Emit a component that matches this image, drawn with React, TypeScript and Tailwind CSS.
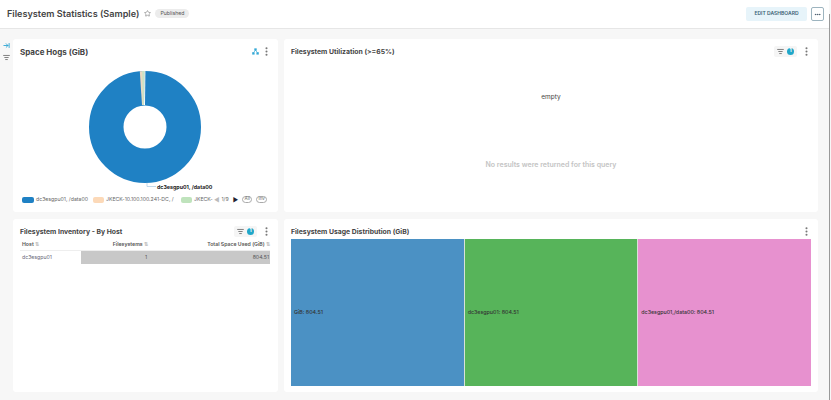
import { ArrowRightToLine, Ellipsis, EllipsisVertical, ListFilter, Star } from "lucide-react";
import type { ReactNode } from "react";

function Kebab() {
  return <EllipsisVertical className="size-[11px] text-[#777]" strokeWidth={2.5} />;
}

function FilterBadge() {
  return (
    <div className="flex h-[11px] w-[23px] items-center justify-center gap-[3px] rounded-[2px] bg-[#f5f5f5]">
      <ListFilter className="size-[7px] text-[#555]" strokeWidth={2.5} />
      <span className="flex size-[7px] items-center justify-center rounded-full bg-[#20a7c9] text-[5px] font-bold text-white">
        1
      </span>
    </div>
  );
}

function Card({
  title,
  actions,
  titleClassName,
  children,
}: {
  title: string;
  actions: ReactNode;
  titleClassName?: string;
  children?: ReactNode;
}) {
  return (
    <section className="flex h-[173px] flex-col rounded-[3px] bg-white">
      <header className="flex h-[20px] shrink-0 items-start justify-between pl-[7px] pr-[6px] pt-[6px]">
        <h2 className={`pt-[1px] font-bold leading-[12px] text-[#444] ${titleClassName ?? "text-[6.85px]"}`}>{title}</h2>
        <div className="flex h-[12px] items-center gap-[4px]">{actions}</div>
      </header>
      {children}
    </section>
  );
}

function SpaceHogsChart() {
  return (
    <svg viewBox="0 0 265 136" className="h-[136px] w-[265px] shrink-0">
      <circle cx="132" cy="68" r="38.75" fill="none" stroke="#1f81c4" strokeWidth="34.5" />
      <path d="M126.8 12.2 L129 46.1 L131 46.1 L131.7 12 Z" fill="#ecd9c0" />
      <path d="M129.2 12.1 L129.8 46.1 L131 46.1 L131.7 12 Z" fill="#c9e3c6" />
      <path d="M131.7 12 L132.4 12 L132 46 L131 46 Z" fill="#fff" />
      <path d="M134 124 V127.5 H143" fill="none" stroke="#a9c9e2" strokeWidth="0.7" />
      <text x="144" y="130" fontSize="5.3" fontWeight="700" fill="#222" fontFamily="Inter, sans-serif">
        dc3esgpu01, /data00
      </text>
    </svg>
  );
}

function Legend() {
  return (
    <div className="flex h-[9px] items-center whitespace-nowrap pl-[9px] text-[5.2px] text-[#666]">
      <span className="h-[6px] w-[12px] shrink-0 rounded-[2px] bg-[#1f81c4]" />
      <span className="ml-[2px] w-[54px]">dc3esgpu01, /data00</span>
      <span className="ml-[3px] h-[6px] w-[11px] shrink-0 rounded-[2px] bg-[#fcd9b8]" />
      <span className="ml-[2px] w-[72px]">JKECK-10.100.100.241-DC, /</span>
      <span className="ml-[3px] h-[6px] w-[11px] shrink-0 rounded-[2px] bg-[#bfe3bc]" />
      <span className="ml-[2px] w-[18px]">JKECK-</span>
      <span className="ml-[2px] text-[6px] leading-none text-[#bbb]">◀</span>
      <span className="ml-[2px]">1/9</span>
      <span className="ml-[4px] text-[6px] leading-none text-[#223]">▶</span>
      <span className="ml-[4px] flex h-[7px] w-[10px] shrink-0 items-center justify-center rounded-full border-[0.5px] border-[#aaa] text-[4.5px]">
        All
      </span>
      <span className="ml-[4px] flex h-[7px] w-[11px] shrink-0 items-center justify-center rounded-full border-[0.5px] border-[#aaa] text-[4.5px]">
        Inv
      </span>
    </div>
  );
}

function InventoryTable() {
  return (
    <div className="pl-[7px] pr-[8px] text-[5.2px] text-[#555]">
      <div className="grid h-[12px] grid-cols-[61px_1fr_122px] items-center border-b border-[#eee] font-semibold">
        <span className="pl-[2px]">
          Host <span className="text-[#bbb]">⇅</span>
        </span>
        <span className="text-right">
          Filesystems <span className="text-[#bbb]">⇅</span>
        </span>
        <span className="text-right">
          Total Space Used (GiB) <span className="text-[#bbb]">⇅</span>
        </span>
      </div>
      <div className="grid h-[13px] grid-cols-[61px_1fr_122px] items-center">
        <span className="pl-[2px] text-[#667]">dc3esgpu01</span>
        <span className="flex h-full items-center justify-end bg-[#c8c8c8] pr-[1px]">1</span>
        <span className="flex h-full items-center justify-end bg-[#c8c8c8] pr-[1px]">804.51</span>
      </div>
    </div>
  );
}

function Treemap() {
  const cells = [
    { label: "GiB: 804.51", color: "bg-[#4b91c4]" },
    { label: "dc3esgpu01: 804.51", color: "bg-[#57b45a]" },
    { label: "dc3esgpu01,/data00: 804.51", color: "bg-[#e791cf]" },
  ];
  return (
    <div className="mx-[7px] grid h-[147px] grid-cols-3 gap-px bg-[#d8e2d8]">
      {cells.map((cell) => (
        <div
          key={cell.label}
          className={`flex items-center pl-[3px] text-[5.3px] font-medium text-[#333] ${cell.color}`}
        >
          {cell.label}
        </div>
      ))}
    </div>
  );
}

export default function App() {
  return (
    <div className="flex h-[400px] w-[831px] overflow-hidden bg-[#f7f7f7] font-['Inter',sans-serif]">
      <div className="flex w-[829px] shrink-0 flex-col">
        <header className="flex h-[29px] shrink-0 items-center justify-between border-b border-[#e6e6e6] bg-white pl-[7px] pr-[5px]">
          <div className="flex items-center">
            <h1 className="text-[9.1px] font-semibold text-[#444]">Filesystem Statistics (Sample)</h1>
            <Star className="ml-[5px] size-[7px] text-[#777]" />
            <span className="ml-[4px] flex h-[9px] items-center rounded-full bg-[#ececec] px-[5px] text-[5.2px] text-[#555]">
              Published
            </span>
          </div>
          <div className="flex items-center gap-[4px]">
            <button className="flex h-[14px] w-[61px] items-center justify-center rounded-[2px] bg-[#e7f4fa] text-[5px] font-semibold text-[#3a6274]">
              EDIT DASHBOARD
            </button>
            <button className="flex h-[14px] w-[13px] items-center justify-center rounded-[2px] border border-[#9db4bf] text-[#456]">
              <Ellipsis className="size-[7px]" strokeWidth={3} />
            </button>
          </div>
        </header>
        <div className="flex min-h-0 flex-1">
          <aside className="flex w-[13px] shrink-0 flex-col items-center gap-[5px] pt-[13px]">
            <ArrowRightToLine className="size-[7px] text-[#2aa3d2]" strokeWidth={3} />
            <ListFilter className="size-[7px] text-[#555]" strokeWidth={2.5} />
          </aside>
          <main className="grid w-[805px] grid-cols-[265px_534px] content-start gap-x-[6px] gap-y-[7px] pt-[10px]">
            <Card
              title="Space Hogs (GiB)"
              titleClassName="text-[8px]"
              actions={
                <>
                  <svg viewBox="0 0 10 10" className="-mr-[2px] size-[7px] fill-[#35a9d6]">
                    <rect x="3.3" y="0.5" width="3.4" height="3.4" />
                    <rect x="0.3" y="6" width="3.4" height="3.4" />
                    <rect x="6.3" y="6" width="3.4" height="3.4" />
                    <path d="M5 3.5 L2 6.5 M5 3.5 L8 6.5" stroke="#35a9d6" />
                  </svg>
                  <Kebab />
                </>
              }
            >
              <SpaceHogsChart />
              <Legend />
            </Card>
            <Card
              title="Filesystem Utilization (>=65%)"
              actions={
                <>
                  <FilterBadge />
                  <Kebab />
                </>
              }
            >
              <p className="pt-[34px] text-center text-[6.5px] text-[#444]">empty</p>
              <p className="pt-[57px] text-center text-[7px] font-semibold text-[#c4c4c4]">
                No results were returned for this query
              </p>
            </Card>
            <Card
              title="Filesystem Inventory - By Host"
              actions={
                <>
                  <FilterBadge />
                  <Kebab />
                </>
              }
            >
              <InventoryTable />
            </Card>
            <Card title="Filesystem Usage Distribution (GiB)" actions={<Kebab />}>
              <Treemap />
            </Card>
          </main>
        </div>
      </div>
      <div className="mt-[14px] w-px bg-[#999]" />
    </div>
  );
}
